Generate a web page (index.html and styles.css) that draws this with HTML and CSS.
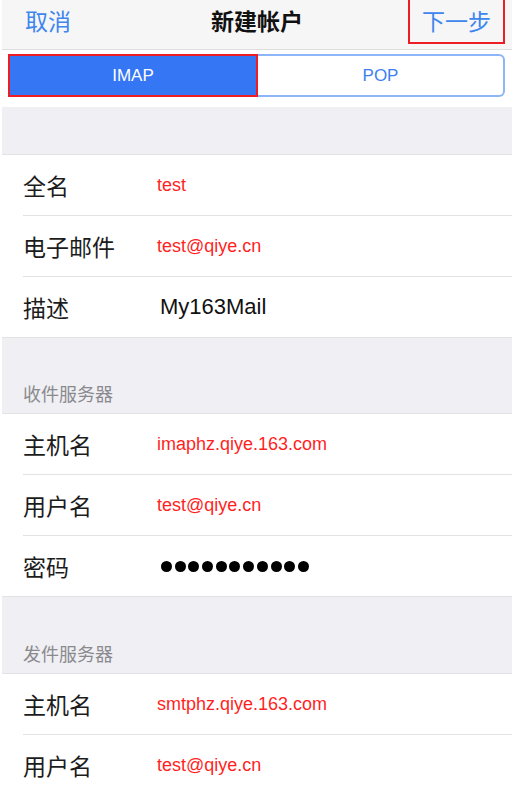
FILE: index.html
```html
<!DOCTYPE html>
<html lang="zh-CN">
<head>
<meta charset="utf-8">
<title>新建帐户</title>
<link rel="stylesheet" href="styles.css">
</head>
<body>
<div class="screen">
  <header class="nav">
    <span class="nav-cancel">取消</span>
    <span class="nav-title">新建帐户</span>
    <span class="nav-next">下一步</span>
  </header>
  <div class="segment-wrap">
    <div class="segment">
      <div class="seg seg-active">IMAP</div>
      <div class="seg seg-off">POP</div>
    </div>
  </div>

  <div class="gap gap-top"></div>
  <section class="group">
    <div class="row"><span class="label">全名</span><span class="value red">test</span></div>
    <div class="row"><span class="label">电子邮件</span><span class="value red">test@qiye.cn</span></div>
    <div class="row last"><span class="label">描述</span><span class="value plain">My163Mail</span></div>
  </section>

  <div class="gap gap-head"><span class="head">收件服务器</span></div>
  <section class="group">
    <div class="row"><span class="label">主机名</span><span class="value red">imaphz.qiye.163.com</span></div>
    <div class="row"><span class="label">用户名</span><span class="value red">test@qiye.cn</span></div>
    <div class="row last"><span class="label">密码</span>
      <span class="dots"><i></i><i></i><i></i><i></i><i></i><i></i><i></i><i></i><i></i><i></i><i></i></span>
    </div>
  </section>

  <div class="gap gap-head gap-head2"><span class="head">发件服务器</span></div>
  <section class="group">
    <div class="row"><span class="label">主机名</span><span class="value red">smtphz.qiye.163.com</span></div>
    <div class="row last"><span class="label">用户名</span><span class="value red">test@qiye.cn</span></div>
  </section>
</div>
</body>
</html>
```
FILE: styles.css
```css
* { box-sizing: border-box; }
html, body {
  margin: 0;
  padding: 0;
  background: #ffffff;
  height: 787px;
  overflow: hidden;
}
body {
  font-family: "Noto Sans CJK SC", "Liberation Sans", sans-serif;
  color: #1c1c1c;
}
.screen {
  margin-left: 2px;
  width: 510px;
}
.nav {
  height: 50px;
  background: #f6f6f6;
  border-bottom: 1px solid #dedede;
  display: grid;
  grid-template-columns: 1fr auto 1fr;
  align-items: start;
}
.nav-cancel {
  justify-self: start;
  padding-left: 23px;
  margin-top: 5px;
  font-size: 23px;
  line-height: 30px;
  color: #3e85ee;
}
.nav-title {
  margin-top: 5px;
  font-size: 23px;
  line-height: 30px;
  font-weight: 700;
  color: #111;
}
.nav-next {
  justify-self: end;
  margin-right: 7px;
  width: 97px;
  height: 44px;
  border: 2px solid #ee1c24;
  border-top: none;
  display: flex;
  align-items: center;
  justify-content: center;
  padding-bottom: 2px;
  font-size: 23px;
  color: #3e85ee;
}
.segment-wrap {
  height: 57px;
  background: #ffffff;
  padding: 4px 7px 0 6px;
}
.segment {
  display: flex;
  height: 43px;
  font-family: "Liberation Sans", Arial, sans-serif;
  font-size: 17px;
}
.seg {
  display: flex;
  align-items: center;
  justify-content: center;
}
.seg-active {
  width: 250px;
  background: #3476f4;
  color: #ffffff;
  border: 2px solid #ee1c24;
}
.seg-off {
  flex: 1;
  color: #3d80f2;
  border: 2px solid #8db5f7;
  border-left: none;
  border-radius: 0 6px 6px 0;
}
.gap {
  background: #efeff4;
  border-bottom: 1px solid #e1e1e6;
}
.gap-top { height: 48px; }
.gap-head {
  height: 76px;
  display: flex;
  align-items: flex-end;
  padding: 0 0 8px 21px;
}
.gap-head2 { height: 77px; }
.head {
  font-size: 18px;
  line-height: 24px;
  color: #8a8a8e;
}
.group {
  background: #ffffff;
  padding-left: 21px;
  border-bottom: 1px solid #e1e1e6;
}
.row {
  height: 61px;
  display: flex;
  align-items: center;
  border-bottom: 1px solid #e3e3e6;
}
.row.last { border-bottom: none; height: 60px; }
.label {
  width: 134px;
  font-size: 23px;
  color: #1c1c1c;
}
.value {
  font-family: "Liberation Sans", Arial, sans-serif;
}
.red {
  font-size: 18px;
  color: #ff1f1f;
}
.plain {
  font-size: 22px;
  color: #111;
  padding-left: 3px;
}
.dots {
  display: flex;
  gap: 2.7px;
  padding-left: 4px;
}
.dots i {
  width: 11px;
  height: 11px;
  border-radius: 50%;
  background: #000;
}
```
